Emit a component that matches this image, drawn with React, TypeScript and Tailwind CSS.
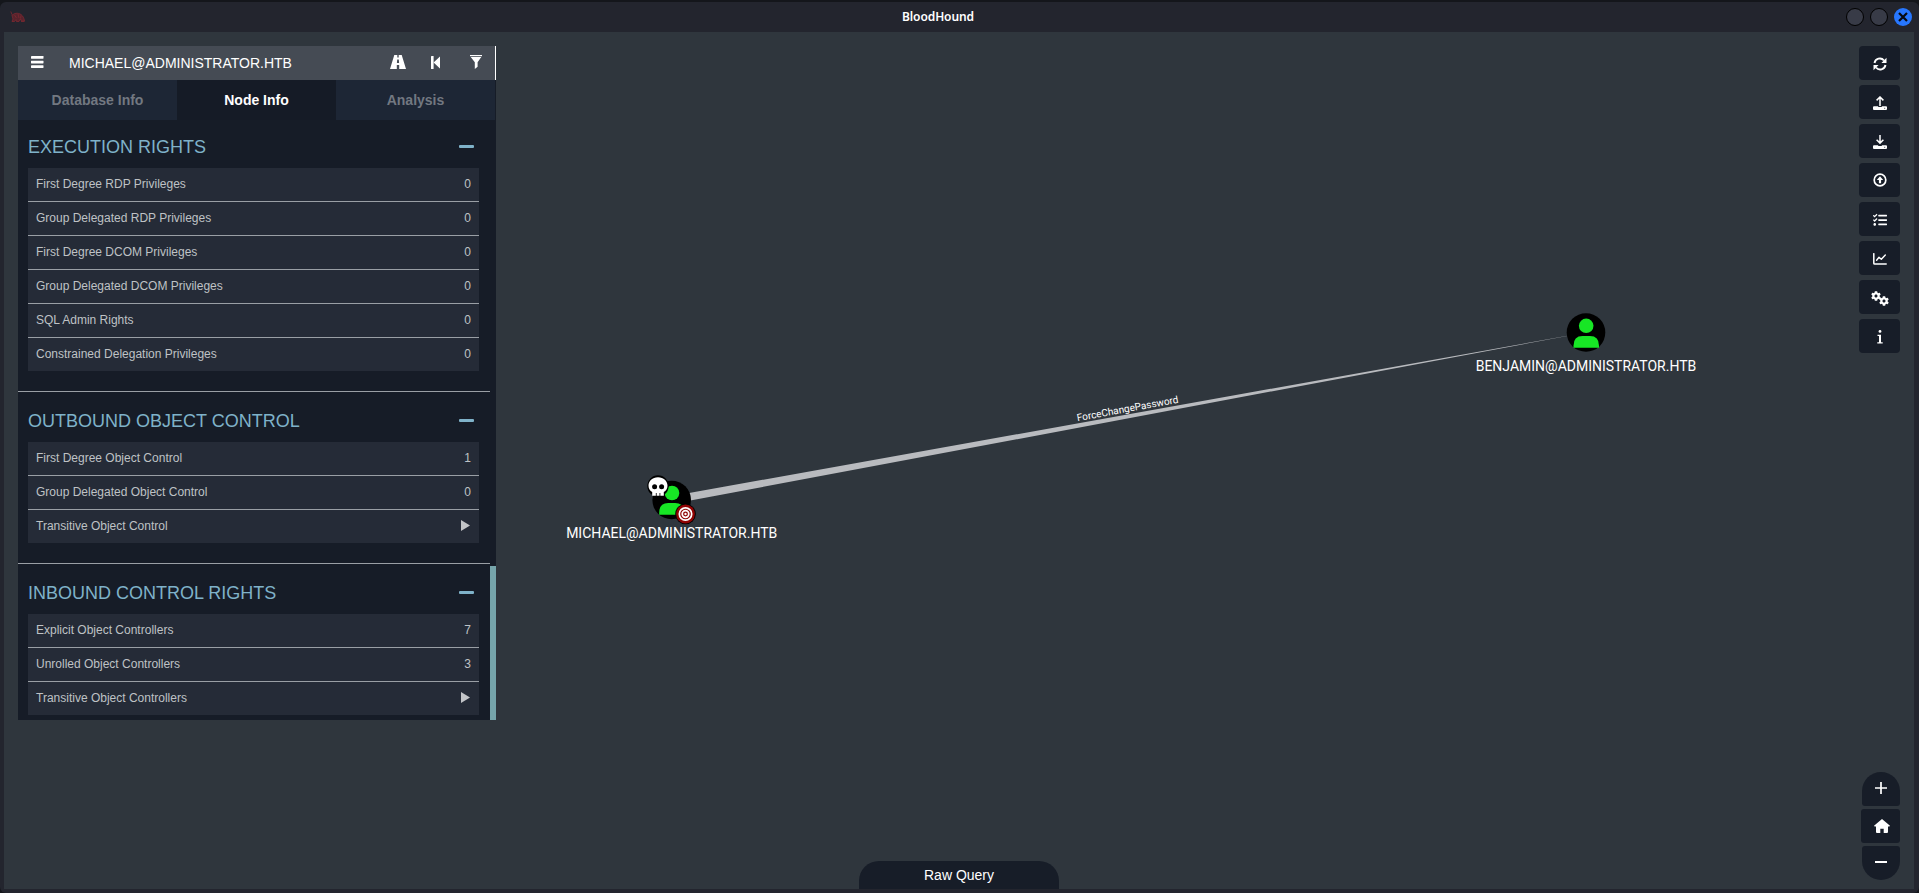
import React from 'react';
import { FaCog, FaTasks } from 'react-icons/fa';

type Row = { label: string; value?: number };
type Section = { title: string; rows: Row[] };

const sections: Section[] = [
  {
    title: 'EXECUTION RIGHTS',
    rows: [
      { label: 'First Degree RDP Privileges', value: 0 },
      { label: 'Group Delegated RDP Privileges', value: 0 },
      { label: 'First Degree DCOM Privileges', value: 0 },
      { label: 'Group Delegated DCOM Privileges', value: 0 },
      { label: 'SQL Admin Rights', value: 0 },
      { label: 'Constrained Delegation Privileges', value: 0 },
    ],
  },
  {
    title: 'OUTBOUND OBJECT CONTROL',
    rows: [
      { label: 'First Degree Object Control', value: 1 },
      { label: 'Group Delegated Object Control', value: 0 },
      { label: 'Transitive Object Control' },
    ],
  },
  {
    title: 'INBOUND CONTROL RIGHTS',
    rows: [
      { label: 'Explicit Object Controllers', value: 7 },
      { label: 'Unrolled Object Controllers', value: 3 },
      { label: 'Transitive Object Controllers' },
    ],
  },
];

function HoundLogo() {
  return (
    <svg width="16" height="12" viewBox="0 0 16 12" fill="none" stroke="#7d2831" strokeWidth=".8">
      <path d="M2 4.500C4 2 8 1.500 11 3.500c2 1.500 3 3.500 3.500 6.500h-3l-1-2-1.500 2.500H6.500L6 8.500 4.500 10.500H2L3 8z" fill="#57232c" />
      <path d="M.8.500l1 2.500 1 1.500M14.500 10.500h-3.500M4.500 4l2 3M8 3l1 4M11 4.500l-.5 3" />
    </svg>
  );
}

function MenuIcon() {
  return (
    <svg width="13" height="12" viewBox="0 0 13 12" fill="#fff">
      <rect width="12.500" height="2.700" rx=".4" />
      <rect y="4.700" width="12.500" height="2.700" rx=".4" />
      <rect y="9.300" width="12.500" height="2.700" rx=".4" />
    </svg>
  );
}

function RoadIcon() {
  return (
    <svg width="16" height="14" viewBox="0 0 16 14" fill="#fff" fillRule="evenodd">
      <path d="M4.300 0h3v2.600h1.400V0h3L16 14H9.200V10H6.800v4H0zM7.200 4.500l-.3 3.500h2.200l-.3-3.500z" />
    </svg>
  );
}

function StepBackIcon() {
  return (
    <svg width="9" height="13" viewBox="0 0 9 13" fill="#fff">
      <rect width="2.600" height="13" rx=".5" />
      <path d="M9 .4v12.200L2.600 6.500z" />
    </svg>
  );
}

function FilterIcon() {
  return (
    <svg width="12" height="14" viewBox="0 0 12 14" fill="#fff">
      <rect width="12" height="1.200" />
      <path d="M.7 2h10.600L7.600 7.200v4.600L4.800 14V7.200z" />
    </svg>
  );
}

function RefreshIcon() {
  return (
    <svg width="14" height="14" viewBox="0 0 14 14">
      <path d="M1.500 6A5.400 5.400 0 0 1 11 3.500M12.500 8A5.400 5.400 0 0 1 3 10.500" fill="none" stroke="#fff" strokeWidth="1.900" />
      <path d="M13.500 .8V6H8.400zM.5 13.200V8h5.100z" fill="#fff" />
    </svg>
  );
}

function DriveIcon({ down = false }: { down?: boolean }) {
  return (
    <svg width="14" height="14" viewBox="0 0 14 14">
      <path
        d={down ? 'M7 0v8M3.600 4.700L7 8.100l3.400-3.400' : 'M7 10V1M3.600 4.400L7 1l3.400 3.400'}
        fill="none"
        stroke="#fff"
        strokeWidth="1.500"
      />
      <path d="M1 10.200h4.200V11h3.600v-.8H13a1 1 0 0 1 1 1V13a1 1 0 0 1-1 1H1a1 1 0 0 1-1-1v-1.800a1 1 0 0 1 1-1z" fill="#fff" />
      <path d="M11.200 12.300h1" stroke="#171d28" strokeWidth=".8" />
    </svg>
  );
}

function CircleUpIcon() {
  return (
    <svg className="-mt-0.5" width="14" height="14" viewBox="0 0 14 14">
      <circle cx="7" cy="7" r="5.800" fill="none" stroke="#fff" strokeWidth="1.700" />
      <path d="M7 3.200L10.200 6.900H8.100V10.300H5.900V6.900H3.800z" fill="#fff" />
    </svg>
  );
}

function ChartIcon() {
  return (
    <svg width="14" height="12" viewBox="0 0 14 12" fill="none" stroke="#fff" strokeLinecap="round" strokeLinejoin="round">
      <path d="M.8.700V10.200q0 .9.900.9H13.200" strokeWidth="1.500" />
      <path d="M3.600 7.200L6 4.300l2.300 2L12.300 2" strokeWidth="1.400" />
    </svg>
  );
}

function GearsIcon() {
  return (
    <span className="flex items-start pl-px">
      <FaCog size={10} />
      <FaCog size={10} className="mt-[5px] -ml-0.5" />
    </span>
  );
}

function InfoIcon() {
  return (
    <svg width="6" height="14" viewBox="0 0 6 14" fill="#fff">
      <circle cx="3" cy="1.400" r="1.400" />
      <path d="M.5 4.700h3.500v7.500h1.700v1.400H.3v-1.400H2V6.100H.5z" />
    </svg>
  );
}

function HomeIcon() {
  return (
    <svg width="16" height="14" viewBox="0 0 16 14" fill="#fff">
      <path d="M8 0l8 6.700-.6.900H14V13q0 1-1 1H9.700V9.800H6.300V14H3q-1 0-1-1V7.600H.6L0 6.700z" />
    </svg>
  );
}

const tools: React.ReactNode[] = [
  <RefreshIcon />,
  <DriveIcon />,
  <DriveIcon down />,
  <CircleUpIcon />,
  <FaTasks size={14} />,
  <ChartIcon />,
  <GearsIcon />,
  <InfoIcon />,
];

function SectionBlock({ section, first, last }: { section: Section; first: boolean; last: boolean }) {
  return (
    <section className={last ? '' : 'pb-5'}>
      {!first && <div className="h-px bg-[#9a9fa5]" />}
      <div className={`${first ? 'h-12' : 'h-[50px]'} flex items-center justify-between pl-2.5 pr-4 text-[#7fb2c9]`}>
        <h2 className={`text-[18px] leading-5 ${first ? 'pt-[5px]' : 'pt-[7px]'}`}>{section.title}</h2>
        <div className={`${first ? 'mt-1' : 'mt-[7px]'} h-[3px] w-[15px] rounded-[1px] bg-[#7fb2c9]`} />
      </div>
      <div className="ml-2.5 mr-[11px] flex flex-col gap-px bg-[#9a9fa5]">
        {section.rows.map((row) => (
          <div key={row.label} className="flex h-[33px] items-center justify-between bg-[#252b37] px-2 text-[12px] text-[#bfc2c5]">
            <span className="-mt-0.5">{row.label}</span>
            {row.value === undefined ? (
              <svg className="mr-px -mt-0.5" width="9" height="11" viewBox="0 0 9 11" fill="#c2c4c7">
                <path d="M0 0l9 5.500L0 11z" />
              </svg>
            ) : (
              <span className="-mt-0.5">{row.value}</span>
            )}
          </div>
        ))}
      </div>
    </section>
  );
}

function Graph() {
  return (
    <svg className="absolute inset-0" width="1910" height="857" viewBox="4 32 1910 857" fontFamily="Roboto, sans-serif" fill="#fff">
      <path d="M671 496.200L1586 332.400L671.700 504z" fill="#b9bbbf" />
      <text x="1127.500" y="412" fontSize="10" textAnchor="middle" transform="rotate(-10.400 1127.500 408.500)">
        ForceChangePassword
      </text>
      <g>
        <circle cx="671.700" cy="500" r="19.300" fill="#000" />
        <circle cx="672" cy="493" r="7.300" fill="#17e625" />
        <path d="M659.200 514.700v-2q0-9.700 9-9.700h7q9 0 9 9.700v2z" fill="#17e625" />
        <circle cx="658" cy="486" r="10.700" fill="#000" />
        <path d="M658 477.200c5.700 0 9.500 3.700 9.500 8.600 0 3-1.500 5.200-3.700 6.300v3.700h-11.600v-3.700c-2.200-1.100-3.700-3.300-3.700-6.300 0-4.900 3.800-8.600 9.500-8.600z" />
        <circle cx="654.600" cy="486.700" r="2.500" fill="#000" />
        <circle cx="661.600" cy="486.700" r="2.500" fill="#000" />
        <path d="M656.300 493v3M659.900 493v3" stroke="#000" strokeWidth=".8" />
        <circle cx="685.500" cy="514" r="10.300" fill="#000" />
        <circle cx="685.500" cy="514" r="9.400" fill="#8f0303" />
        <g fill="none" stroke="#fff" strokeWidth="1.700">
          <circle cx="685.500" cy="514" r="6.200" />
          <circle cx="685.500" cy="514" r="3.300" />
        </g>
        <circle cx="685.500" cy="514" r="1.200" />
        <text x="671.700" y="538" fontSize="14" textAnchor="middle">MICHAEL@ADMINISTRATOR.HTB</text>
      </g>
      <g>
        <circle cx="1586" cy="332.500" r="19.300" fill="#000" />
        <circle cx="1586.200" cy="325.800" r="7.300" fill="#17e625" />
        <path d="M1573.500 347.700v-2q0-9.700 9-9.700h7.500q9 0 9 9.700v2z" fill="#17e625" />
        <text x="1586" y="371" fontSize="14" textAnchor="middle">BENJAMIN@ADMINISTRATOR.HTB</text>
      </g>
    </svg>
  );
}

export default function App() {
  return (
    <div className="flex h-[893px] w-[1919px] flex-col overflow-hidden bg-[#14161b] pt-0.5 font-['Liberation_Sans',Arial,sans-serif]">
      <div className="flex flex-1 flex-col rounded-[6px] bg-[#23252e] px-1 pb-1 pr-[5px]">
        <header className="grid h-[30px] shrink-0 grid-cols-3 items-center">
          <div className="pl-[6px]">
            <HoundLogo />
          </div>
          <div className="-ml-[42px] text-center font-['Noto_Sans',sans-serif] text-[12px] font-semibold tracking-[-0.1px] text-white">BloodHound</div>
          <div className="flex justify-end gap-[6px] pr-[2px]">
            <span className="size-[18px] rounded-full border border-black bg-[#383b47]" />
            <span className="size-[18px] rounded-full border border-black bg-[#383b47]" />
            <span className="flex size-[18px] items-center justify-center rounded-full bg-[#2777ff]">
              <svg width="10" height="10" viewBox="0 0 10 10" stroke="#080a10" strokeWidth="2.200">
                <path d="M1 1l8 8M9 1L1 9" />
              </svg>
            </span>
          </div>
        </header>

        <main className="relative flex flex-1 justify-between bg-[#2f363d] pl-3.5 pr-3.5 pt-3.5">
          <Graph />

          <aside className="relative flex h-[674px] w-[478px] flex-col bg-[#161c27]">
            <div className="flex h-[34px] shrink-0 items-center border-r border-white bg-[#454b54]">
              <div className="flex w-[39px] justify-center pb-[2px]">
                <MenuIcon />
              </div>
              <div className="flex-1 pl-[12px] text-[14px] text-white">MICHAEL@ADMINISTRATOR.HTB</div>
              <div className="flex w-[39px] justify-center pb-[2px]"><RoadIcon /></div>
              <div className="flex w-[39px] justify-center pr-[2px] pb-px"><StepBackIcon /></div>
              <div className="flex w-[39px] justify-center pb-[2px]"><FilterIcon /></div>
            </div>
            <nav className="mr-px grid h-10 shrink-0 grid-cols-3 text-center text-[14px] leading-10 font-bold">
              <div className="bg-[#1d2635] text-[#727881]">Database Info</div>
              <div className="bg-[#151b26] text-white">Node Info</div>
              <div className="bg-[#1d2635] text-[#727881]">Analysis</div>
            </nav>
            <div className="flex flex-1">
              <div className="w-[472px]">
                {sections.map((s, i) => (
                  <SectionBlock key={s.title} section={s} first={i === 0} last={i === sections.length - 1} />
                ))}
              </div>
              <div className="h-[154px] w-1.5 self-end bg-[#76a5ab]" />
            </div>
          </aside>

          <div className="relative flex flex-col items-end justify-between pb-[9px]">
            <div className="flex flex-col gap-[5px]">
              {tools.map((icon, i) => (
                <button key={i} className="flex h-[34px] w-[41px] items-center justify-center rounded-[4px] bg-[#171d28] pt-[2px] text-white">
                  {icon}
                </button>
              ))}
            </div>
            <div className="flex flex-col items-end gap-[3px]">
              <button className="flex h-[34px] w-[38px] items-center justify-center rounded-t-[19px] rounded-b-[3px] bg-[#171d28]">
                <svg className="-mt-0.5" width="12" height="12" viewBox="0 0 12 12" stroke="#fff" strokeWidth="1.700">
                  <path d="M6 0v12M0 6h12" />
                </svg>
              </button>
              <button className="flex h-[34px] w-[39px] items-center justify-center rounded-[3px] bg-[#171d28] pl-[3px]">
                <HomeIcon />
              </button>
              <button className="flex h-[34px] w-[38px] items-center justify-center rounded-t-[3px] rounded-b-[19px] bg-[#171d28]">
                <span className="-mt-0.5 h-0.5 w-3 bg-white" />
              </button>
            </div>
          </div>

          <div className="absolute bottom-0 left-[855px] h-7 w-[200px] rounded-t-[20px] bg-[#171d28] text-center text-[14px] leading-7 text-white">
            Raw Query
          </div>
        </main>
      </div>
    </div>
  );
}
